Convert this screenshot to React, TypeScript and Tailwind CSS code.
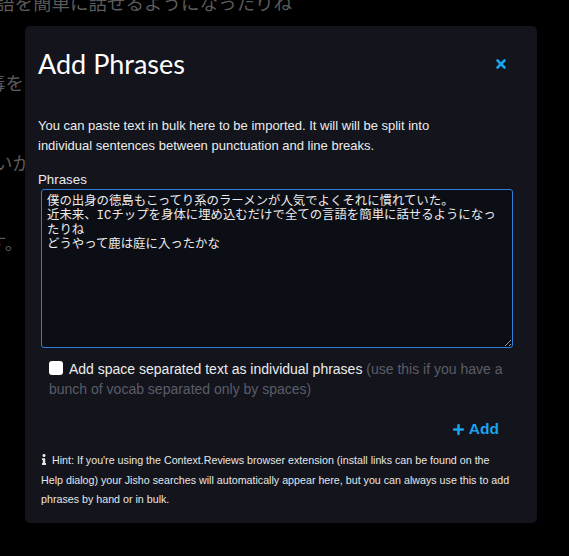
import React, { useEffect, useRef } from 'react';
import { X, Plus } from 'lucide-react';
import { FaInfo } from 'react-icons/fa';

const phrases = `僕の出身の徳島もこってり系のラーメンが人気でよくそれに慣れていた。
近未来、ICチップを身体に埋め込むだけで全ての言語を簡単に話せるようになったりね
どうやって鹿は庭に入ったかな`;

const bgRows = [
  { text: '語を簡単に話せるようになったりね', shift: '-ml-[4px]' },
  { text: '毒を', shift: '-ml-[13px]' },
  { text: 'いが', shift: '-ml-[6px]' },
  { text: 'す。', shift: '-ml-[12px]' },
];

const App: React.FC = () => {
  const areaRef = useRef<HTMLTextAreaElement>(null);

  useEffect(() => {
    const el = areaRef.current;
    if (!el) return;
    el.focus();
    el.setSelectionRange(el.value.length, el.value.length);
  }, []);

  return (
    <div className="relative h-[556px] w-full overflow-hidden bg-black">
      {/* page behind the dialog */}
      <div className="flex flex-col gap-[53px] -mt-[11px] text-[18.5px] leading-[27px] text-[#5b5b5b] [font-family:'Noto_Sans_CJK_JP',sans-serif]">
        {bgRows.map((r, i) => (
          <div key={i} className={`whitespace-nowrap ${r.shift}`}>{r.text}</div>
        ))}
      </div>

      {/* Dialog */}
      <div className="absolute left-[25px] top-[26px] w-[512px] h-[497px] rounded-[5px] bg-[#13141c] pl-[16px] pr-[24px] text-[#ececec] [font-family:'Liberation_Sans',Arial,sans-serif]">
        <div className="flex items-center justify-between pt-[20px]">
          <h3 className="text-[27px] leading-[36px] -ml-[3px] text-white [font-family:Lato,sans-serif]">Add Phrases</h3>
          <button className="mr-[5px] -mt-[1px] text-[#1aa3ee]">
            <X className="w-[14px] h-[14px]" strokeWidth={4.5} />
          </button>
        </div>

        <p className="mt-[34px] -ml-[3px] pr-[34px] text-[13px] leading-[20px]">
          You can paste text in bulk here to be imported. It will will be split into individual sentences between punctuation and line breaks.
        </p>

        <label className="block mt-[16px] -ml-[3px] text-[13.3px] leading-[16px]">Phrases</label>
        <textarea
          ref={areaRef}
          defaultValue={phrases}
          className="block w-full h-[159px] mt-[1px] rounded-[3px] border border-[#2f7fd8] bg-[#0c0e15] px-[5px] py-[5px] text-[12.4px] leading-[14.3px] text-[#ececec] outline-none [font-family:'Liberation_Mono','Noto_Sans_CJK_JP',monospace]"
        />

        <div className="mt-[11px] pl-[8px] text-[14px] leading-[20px]">
          <input type="checkbox" className="appearance-none w-[14px] h-[14px] rounded-[3px] bg-white align-[-1px] mr-[6px]" />
          <span className="text-[#ececec]">Add space separated text as individual phrases</span>{' '}
          <span className="text-[#5a5d69]">(use this if you have a bunch of vocab separated only by spaces)</span>
        </div>

        <div className="flex justify-end mt-[20px] pr-[14px]">
          <button className="flex items-center gap-[3px] text-[#1aa3ee] font-bold text-[15.5px] leading-[20px]">
            <Plus className="w-[15px] h-[15px]" strokeWidth={4} />
            Add
          </button>
        </div>

        <p className="mt-[12px] text-[10.7px] leading-[19.5px] text-[#e6e6e6]">
          <FaInfo className="inline w-[6px] h-[11px] mr-[5px] align-[-1px]" />
          Hint: If you're using the Context.Reviews browser extension (install links can be found on the Help dialog) your Jisho searches will automatically appear here, but you can always use this to add phrases by hand or in bulk.
        </p>
      </div>
    </div>
  );
};

export default App;
